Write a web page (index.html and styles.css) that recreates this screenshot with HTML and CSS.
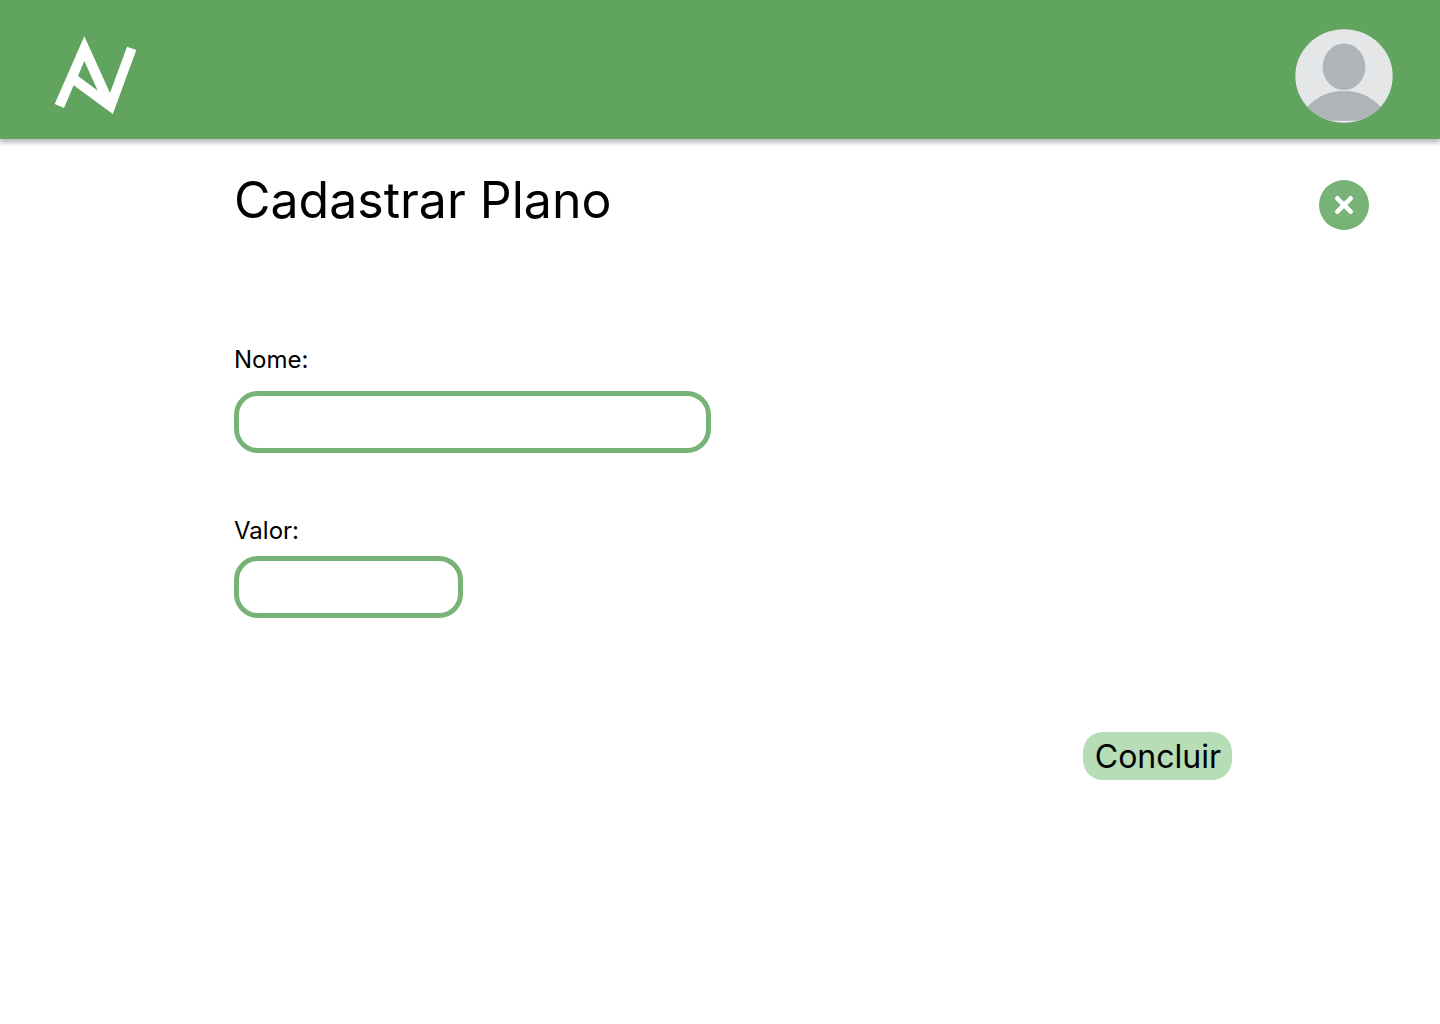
FILE: index.html
```html
<!DOCTYPE html>
<html lang="pt-BR">
<head>
  <meta charset="utf-8">
  <meta name="viewport" content="width=device-width, initial-scale=1">
  <title>Cadastrar Plano</title>
  <link rel="stylesheet" href="styles.css">
</head>
<body>
  <header class="topbar">
    <a class="logo" href="#" aria-label="Início">
      <svg width="83" height="80" viewBox="0 0 83 80" aria-hidden="true">
        <path fill="#fff" fill-rule="evenodd" d="M30.3 0.3 56 57 73 10.7 82.3 14 58.8 78 19.7 49.2 10 72 0.7 68ZM30.3 25 24 40 43.8 54.7Z"/>
      </svg>
    </a>
    <button class="avatar" type="button" aria-label="Perfil">
      <svg width="98" height="94" viewBox="0 0 98 94" aria-hidden="true">
        <defs>
          <clipPath id="avatar-shape"><ellipse cx="49" cy="47" rx="48.7" ry="46.8"/></clipPath>
        </defs>
        <g clip-path="url(#avatar-shape)">
          <rect width="98" height="94" fill="#e4e6e8"/>
          <ellipse cx="49" cy="37.8" rx="21.4" ry="23.2" fill="#aeb4b8"/>
          <path fill="#aeb4b8" d="M7 91.7V84C17 70 31 62 49 62S81 70 91 84V91.7Z"/>
        </g>
      </svg>
    </button>
  </header>

  <main class="page">
    <div class="heading">
      <h1 class="title">Cadastrar Plano</h1>
      <button class="close" type="button" aria-label="Fechar">
        <svg width="20" height="20" viewBox="0 0 20 20" aria-hidden="true">
          <path d="M3.3 3.3 16.7 16.7M16.7 3.3 3.3 16.7" fill="none" stroke="#fff" stroke-width="4.6" stroke-linecap="round"/>
        </svg>
      </button>
    </div>

    <form class="form">
      <div class="field field-name">
        <label for="nome">Nome:</label>
        <input class="input input-wide" id="nome" name="nome" type="text">
      </div>
      <div class="field field-value">
        <label for="valor">Valor:</label>
        <input class="input input-short" id="valor" name="valor" type="text">
      </div>
      <button class="submit" type="submit">Concluir</button>
    </form>
  </main>
</body>
</html>
```

FILE: styles.css
```css
* {
  box-sizing: border-box;
}

body {
  margin: 0;
  background: #fff;
  color: #000;
  font-family: Inter, "Liberation Sans", sans-serif;
}

button {
  border: 0;
  padding: 0;
  font: inherit;
  color: inherit;
  cursor: pointer;
}

svg {
  display: block;
}

.topbar {
  display: flex;
  justify-content: space-between;
  align-items: center;
  padding: 29px 47px 16px 54px;
  background: #60a45f;
  box-shadow: 0 4px 4px rgba(0, 0, 0, 0.25);
}

.avatar {
  background: none;
}

.page {
  padding: 31px 71px 32px 234px;
}

.heading {
  display: flex;
  justify-content: space-between;
  align-items: center;
}

.title {
  margin: 0;
  font-size: 50px;
  line-height: 60px;
  font-weight: 400;
}

.close {
  display: flex;
  align-items: center;
  justify-content: center;
  width: 50px;
  height: 50px;
  margin-top: 10px;
  border-radius: 50%;
  background: #77b277;
}

.form {
  display: flex;
  flex-direction: column;
  align-items: flex-start;
  padding-top: 115px;
}

.field {
  display: flex;
  flex-direction: column;
  max-width: 100%;
  font-size: 24px;
  line-height: 30px;
}

.field-name {
  gap: 16px;
}

.field-value {
  gap: 10px;
  margin-top: 63px;
}

.input {
  max-width: 100%;
  height: 62px;
  padding: 0 20px;
  border: 5px solid #77b277;
  border-radius: 24px;
  background: #fff;
  font: inherit;
}

.input-wide {
  width: 477px;
}

.input-short {
  width: 229px;
}

.submit {
  align-self: flex-end;
  margin: 114px 137px 0 0;
  padding: 2px 11px 0 12px;
  border-radius: 20px;
  background: #b6ddb6;
  font-size: 32px;
  line-height: 46px;
}
```
